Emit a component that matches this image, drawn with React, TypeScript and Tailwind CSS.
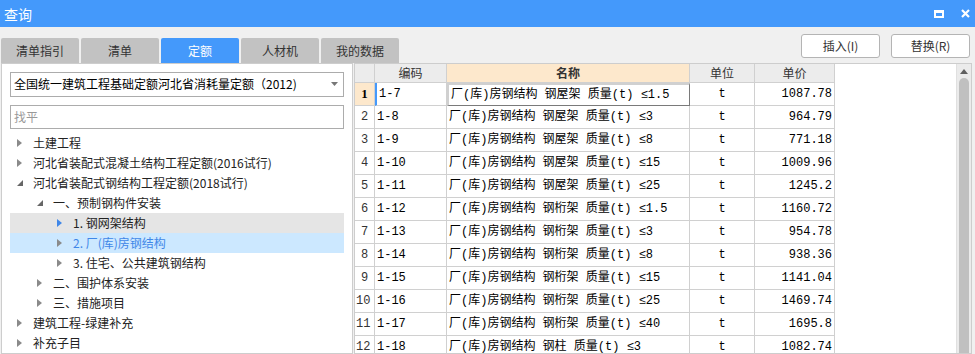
import React from "react";

const UI = "font-['Microsoft_YaHei','Noto_Sans_CJK_SC',sans-serif]";
const MONO = "font-['Liberation_Mono','Noto_Sans_CJK_SC',monospace]";

type Row = { code: string; kind: string; q: string; price: string };
const rows: Row[] = [
  { code: "1-7", kind: "钢屋架", q: "≤1.5", price: "1087.78" },
  { code: "1-8", kind: "钢屋架", q: "≤3", price: "964.79" },
  { code: "1-9", kind: "钢屋架", q: "≤8", price: "771.18" },
  { code: "1-10", kind: "钢屋架", q: "≤15", price: "1009.96" },
  { code: "1-11", kind: "钢屋架", q: "≤25", price: "1245.2" },
  { code: "1-12", kind: "钢桁架", q: "≤1.5", price: "1160.72" },
  { code: "1-13", kind: "钢桁架", q: "≤3", price: "954.78" },
  { code: "1-14", kind: "钢桁架", q: "≤8", price: "938.36" },
  { code: "1-15", kind: "钢桁架", q: "≤15", price: "1141.04" },
  { code: "1-16", kind: "钢桁架", q: "≤25", price: "1469.74" },
  { code: "1-17", kind: "钢桁架", q: "≤40", price: "1695.8" },
  { code: "1-18", kind: "钢柱", q: "≤3", price: "1082.74" },
];

function Collapsed({ color = "#8a8a8a" }: { color?: string }) {
  return (
    <svg width="5" height="8" viewBox="0 0 5 8">
      <path d="M0 0 L5 4 L0 8 Z" fill={color} />
    </svg>
  );
}
function Expanded() {
  return (
    <svg width="6" height="6" viewBox="0 0 6 6">
      <path d="M6 0 L6 6 L0 6 Z" fill="#666" />
    </svg>
  );
}

type TreeItem = {
  level: number;
  text: string;
  open?: boolean;
  bg?: string;
  color?: string;
  arrow?: string;
};
const tree: TreeItem[] = [
  { level: 0, text: "土建工程" },
  { level: 0, text: "河北省装配式混凝土结构工程定额(2016试行)" },
  { level: 0, text: "河北省装配式钢结构工程定额(2018试行)", open: true },
  { level: 1, text: "一、预制钢构件安装", open: true },
  { level: 2, text: "1. 钢网架结构", bg: "bg-[#e5e5e5]", arrow: "#3f87e8" },
  { level: 2, text: "2. 厂(库)房钢结构", bg: "bg-[#cce8ff]", color: "text-[#3f87e8]" },
  { level: 2, text: "3. 住宅、公共建筑钢结构" },
  { level: 1, text: "二、围护体系安装" },
  { level: 1, text: "三、措施项目" },
  { level: 0, text: "建筑工程-绿建补充" },
  { level: 0, text: "补充子目" },
];

const pad = ["pl-[7px]", "pl-[27px]", "pl-[47px]"];

export default function App() {
  const tabs = ["清单指引", "清单", "定额", "人材机", "我的数据"];
  return (
    <div className={`w-[975px] h-[354px] overflow-hidden bg-[#f0f0f0] flex flex-col ${UI}`}>
      {/* title bar */}
      <div className="h-[27px] shrink-0 bg-[#4499fb] flex items-center justify-between pl-[4px] pr-[5px]">
        <span className="text-white text-[14px] leading-none">查询</span>
        <div className="flex items-center gap-[17px]">
          <div className="w-[10px] h-[8px] border-[2px] border-t-[3px] border-white" />
          <svg width="9" height="9" viewBox="0 0 9 9">
            <path d="M1 1 L8 8 M8 1 L1 8" stroke="white" strokeWidth="2.2" />
          </svg>
        </div>
      </div>

      {/* tab row */}
      <div className="h-[36px] shrink-0 flex items-end justify-between pl-[1px] pr-[5px]">
        <div className="flex gap-[2px]">
          {tabs.map((t) => (
            <div
              key={t}
              className={`w-[78px] h-[25px] rounded-t-[2px] flex items-center justify-center text-[12px] ${
                t === "定额" ? "bg-[#4499fb] text-white" : "bg-[#c2c2c2] text-[#333]"
              }`}
            >
              {t}
            </div>
          ))}
        </div>
        <div className="flex gap-[11px] self-start mt-[7px]">
          <button className="w-[79px] h-[24px] bg-white border border-[#b4b4b4] rounded-[3px] text-[12px] text-[#333]">
            插入(I)
          </button>
          <button className="w-[79px] h-[24px] bg-white border border-[#b4b4b4] rounded-[3px] text-[12px] text-[#333]">
            替换(R)
          </button>
        </div>
      </div>

      {/* main */}
      <div className="flex-1 flex pl-[1px] pr-[3px] min-h-0">
        {/* left panel */}
        <div className="w-[352px] shrink-0 bg-white border border-[#cdcdcd] px-[8px] pt-[8px] flex flex-col">
          <div className="h-[25px] border border-[#acacac] flex items-center justify-between pl-[3px] pr-[5px] text-[12px] text-black">
            <span>全国统一建筑工程基础定额河北省消耗量定额（2012)</span>
            <svg width="7" height="4" viewBox="0 0 7 4">
              <path d="M0 0 L7 0 L3.5 4 Z" fill="#777" />
            </svg>
          </div>
          <div className="mt-[8px] h-[25px] border border-[#acacac] flex items-center pl-[3px] text-[12px] text-[#999]">
            找平
          </div>
          <div className="mt-[4px] flex flex-col">
            {tree.map((it, i) => (
              <div
                key={i}
                className={`h-[20px] flex items-center text-[12px] ${pad[it.level]} ${it.bg ?? ""} ${
                  it.color ?? "text-[#222]"
                }`}
              >
                <span className="w-[16px] flex items-center">
                  {it.open ? <Expanded /> : <Collapsed color={it.arrow} />}
                </span>
                <span>{it.text}</span>
              </div>
            ))}
          </div>
        </div>

        {/* grid panel */}
        <div className="flex-1 ml-[1px] bg-white border border-[#cdcdcd] flex min-w-0">
          <div className="flex-1 flex flex-col">
            {/* header */}
            <div className="flex h-[23px] text-[12px] text-[#333]">
              <div className="w-[20px] bg-[#ececec] border-r border-b border-[#d0d0d0]" />
              <div className="w-[72px] bg-[#ececec] border-r border-b border-[#d0d0d0] flex items-center justify-center">
                编码
              </div>
              <div className="w-[243px] bg-[#fde8cc] border-r border-b border-[#d0d0d0] flex items-center justify-center font-bold">
                名称
              </div>
              <div className="w-[65px] bg-[#ececec] border-r border-b border-[#d0d0d0] flex items-center justify-center">
                单位
              </div>
              <div className="w-[80px] bg-[#ececec] border-r border-b border-[#d0d0d0] flex items-center justify-center">
                单价
              </div>
            </div>
            {rows.map((r, i) => {
              const first = i === 0;
              return (
                <div key={r.code} className={`flex h-[23px] shrink-0 text-[12px] text-black ${MONO}`}>
                  <div
                    className={`w-[20px] border-r border-b border-[#d0d0d0] flex items-center ${
                      first
                        ? "bg-[#fde8cc] justify-center font-bold font-['Liberation_Serif',serif] text-[13px]"
                        : i >= 9
                        ? "justify-start pl-[1px] text-[#333]"
                        : "justify-center text-[#333]"
                    }`}
                  >
                    {i + 1}
                  </div>
                  <div
                    className={`w-[72px] border-r border-b border-[#d0d0d0] flex items-center pl-[2px] ${
                      first ? "border-l-2 border-l-[#4499fb] pl-0" : ""
                    }`}
                  >
                    {r.code}
                  </div>
                  <div
                    className={`w-[243px] border-r border-b border-[#d0d0d0] flex items-center pl-[2px] whitespace-nowrap overflow-hidden ${
                      first ? "border-2 border-[#7a7a7a] border-r-[#7a7a7a] border-b-[#7a7a7a] pl-[1px]" : ""
                    }`}
                  >
                    厂(库)房钢结构 {r.kind} 质量(t) {r.q}
                  </div>
                  <div className="w-[65px] border-r border-b border-[#d0d0d0] flex items-center justify-center">
                    t
                  </div>
                  <div className="w-[80px] border-r border-b border-[#d0d0d0] flex items-center justify-end pr-[2px]">
                    {r.price.replace(".", ". ").replace(". ", ".")}
                  </div>
                </div>
              );
            })}
          </div>
          {/* scrollbar */}
          <div className="w-[15px] shrink-0 bg-[#ebebeb] border-l border-[#e0e0e0] flex flex-col items-center">
            <svg className="mt-[5px]" width="8" height="5" viewBox="0 0 8 5">
              <path d="M0 5 L4 0 L8 5 Z" fill="#606060" />
            </svg>
            <div className="mt-[4px] w-[10px] flex-1 bg-[#c0c0c0] rounded-t-[5px]" />
          </div>
        </div>
      </div>
    </div>
  );
}
